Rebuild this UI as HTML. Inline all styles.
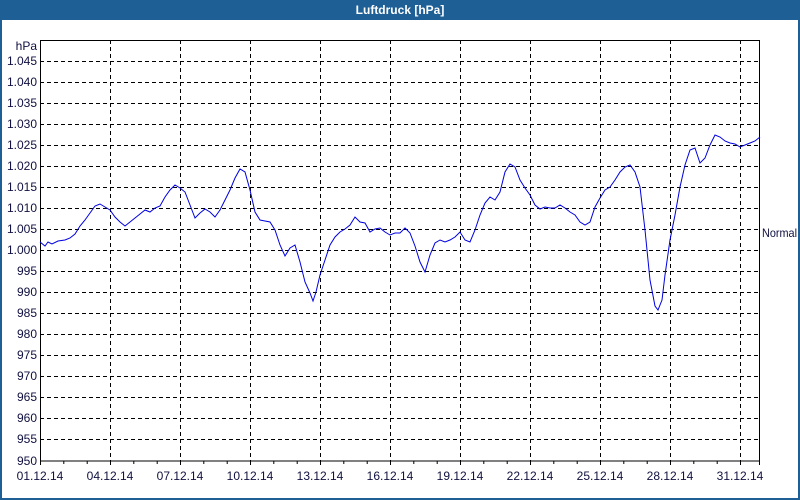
<!DOCTYPE html>
<html><head><meta charset="utf-8"><style>
html,body{margin:0;padding:0;width:800px;height:500px;overflow:hidden;background:#fff}
.win{position:absolute;left:0;top:0;width:796px;height:498px;border:2px solid #1e5f96;border-top:none;background:#fff}
.title{position:absolute;left:0;top:0;width:800px;height:20px;background:#1e5f96;color:#fff;font:bold 12px "Liberation Sans",sans-serif;text-align:center;line-height:20px}
svg{position:absolute;left:0;top:0}
text{font-family:"Liberation Sans",sans-serif;font-size:12px;fill:#101040}
</style></head><body>
<div class="win"></div>
<div class="title">Luftdruck [hPa]</div>
<svg width="800" height="500">
<g stroke="#000" stroke-dasharray="4,3" stroke-width="1">
<line x1="40" y1="61.5" x2="760" y2="61.5"/><line x1="40" y1="82.5" x2="760" y2="82.5"/><line x1="40" y1="103.5" x2="760" y2="103.5"/><line x1="40" y1="124.5" x2="760" y2="124.5"/><line x1="40" y1="145.5" x2="760" y2="145.5"/><line x1="40" y1="166.5" x2="760" y2="166.5"/><line x1="40" y1="187.5" x2="760" y2="187.5"/><line x1="40" y1="208.5" x2="760" y2="208.5"/><line x1="40" y1="229.5" x2="760" y2="229.5"/><line x1="40" y1="250.5" x2="760" y2="250.5"/><line x1="40" y1="271.5" x2="760" y2="271.5"/><line x1="40" y1="292.5" x2="760" y2="292.5"/><line x1="40" y1="313.5" x2="760" y2="313.5"/><line x1="40" y1="334.5" x2="760" y2="334.5"/><line x1="40" y1="355.5" x2="760" y2="355.5"/><line x1="40" y1="376.5" x2="760" y2="376.5"/><line x1="40" y1="397.5" x2="760" y2="397.5"/><line x1="40" y1="418.5" x2="760" y2="418.5"/><line x1="40" y1="439.5" x2="760" y2="439.5"/>
<line x1="110.5" y1="40" x2="110.5" y2="461"/><line x1="180.5" y1="40" x2="180.5" y2="461"/><line x1="250.5" y1="40" x2="250.5" y2="461"/><line x1="320.5" y1="40" x2="320.5" y2="461"/><line x1="390.5" y1="40" x2="390.5" y2="461"/><line x1="460.5" y1="40" x2="460.5" y2="461"/><line x1="530.5" y1="40" x2="530.5" y2="461"/><line x1="600.5" y1="40" x2="600.5" y2="461"/><line x1="670.5" y1="40" x2="670.5" y2="461"/><line x1="740.5" y1="40" x2="740.5" y2="461"/>
</g>
<rect x="40.5" y="40.5" width="719" height="420.5" fill="none" stroke="#000"/>
<g stroke="#000">
<path d="M40.5 461v4M63.8 461v3M87.2 461v3M110.5 461v4M133.8 461v3M157.2 461v3M180.5 461v4M203.8 461v3M227.2 461v3M250.5 461v4M273.8 461v3M297.2 461v3M320.5 461v4M343.8 461v3M367.2 461v3M390.5 461v4M413.8 461v3M437.2 461v3M460.5 461v4M483.8 461v3M507.2 461v3M530.5 461v4M553.8 461v3M577.2 461v3M600.5 461v4M623.8 461v3M647.2 461v3M670.5 461v4M693.8 461v3M717.2 461v3M740.5 461v4M759.5 461v4"/>
</g>
<polyline fill="none" stroke="#0000e0" stroke-width="1" points="40,242 45,246 48,242 52,244 58,241 65,240 70,238 75,234 80,226 85,220 90,213 95,206 100,204 105,207 110,210 115,217 120,222 125,226 130,222 135,218 140,214 145,210 150,212 155,208 160,206 165,197 170,190 175,185 180,188 185,192 190,205 195,218 200,213 205,209 210,212 215,217 220,210 225,200 230,190 235,178 240,169 245,172 250,190 255,212 260,220 265,221 270,222 275,230 280,245 285,256 290,248 295,245 300,262 305,282 310,293 313,301 316,292 320,275 325,260 330,245 335,237 340,232 345,229 350,225 355,217 360,222 365,223 370,232 375,229 380,228 385,232 390,235 395,233 400,233 405,228 410,233 415,246 420,262 425,272 430,255 435,243 440,240 445,242 450,240 455,237 460,232 465,240 470,242 475,230 480,215 485,203 490,197 495,200 500,192 505,172 510,164 515,167 520,180 525,188 530,195 535,205 540,209 545,207 550,208 555,208 560,205 565,208 570,212 575,215 580,222 585,225 590,222 595,207 600,198 605,190 610,187 615,180 620,172 625,167 630,165 635,172 640,187 645,230 650,280 655,306 658,310 662,300 665,275 670,240 675,215 680,187 685,165 690,150 695,148 700,163 705,158 710,145 715,135 720,137 725,141 730,143 735,144 740,147 745,145 750,143 755,141 760,137"/>
<g text-anchor="end">
<text x="37" y="50">hPa</text>
<text x="37" y="65">1.045</text><text x="37" y="86">1.040</text><text x="37" y="107">1.035</text><text x="37" y="128">1.030</text><text x="37" y="149">1.025</text><text x="37" y="170">1.020</text><text x="37" y="191">1.015</text><text x="37" y="212">1.010</text><text x="37" y="233">1.005</text><text x="37" y="254">1.000</text><text x="37" y="275">995</text><text x="37" y="296">990</text><text x="37" y="317">985</text><text x="37" y="338">980</text><text x="37" y="359">975</text><text x="37" y="380">970</text><text x="37" y="401">965</text><text x="37" y="422">960</text><text x="37" y="443">955</text><text x="37" y="465">950</text>
</g>
<g text-anchor="middle">
<text x="40" y="480">01.12.14</text><text x="110" y="480">04.12.14</text><text x="180" y="480">07.12.14</text><text x="250" y="480">10.12.14</text><text x="320" y="480">13.12.14</text><text x="390" y="480">16.12.14</text><text x="460" y="480">19.12.14</text><text x="530" y="480">22.12.14</text><text x="600" y="480">25.12.14</text><text x="670" y="480">28.12.14</text><text x="740" y="480">31.12.14</text>
</g>
<text x="762" y="237" font-size="11" textLength="35" lengthAdjust="spacingAndGlyphs">Normal</text>
</svg>
</body></html>
